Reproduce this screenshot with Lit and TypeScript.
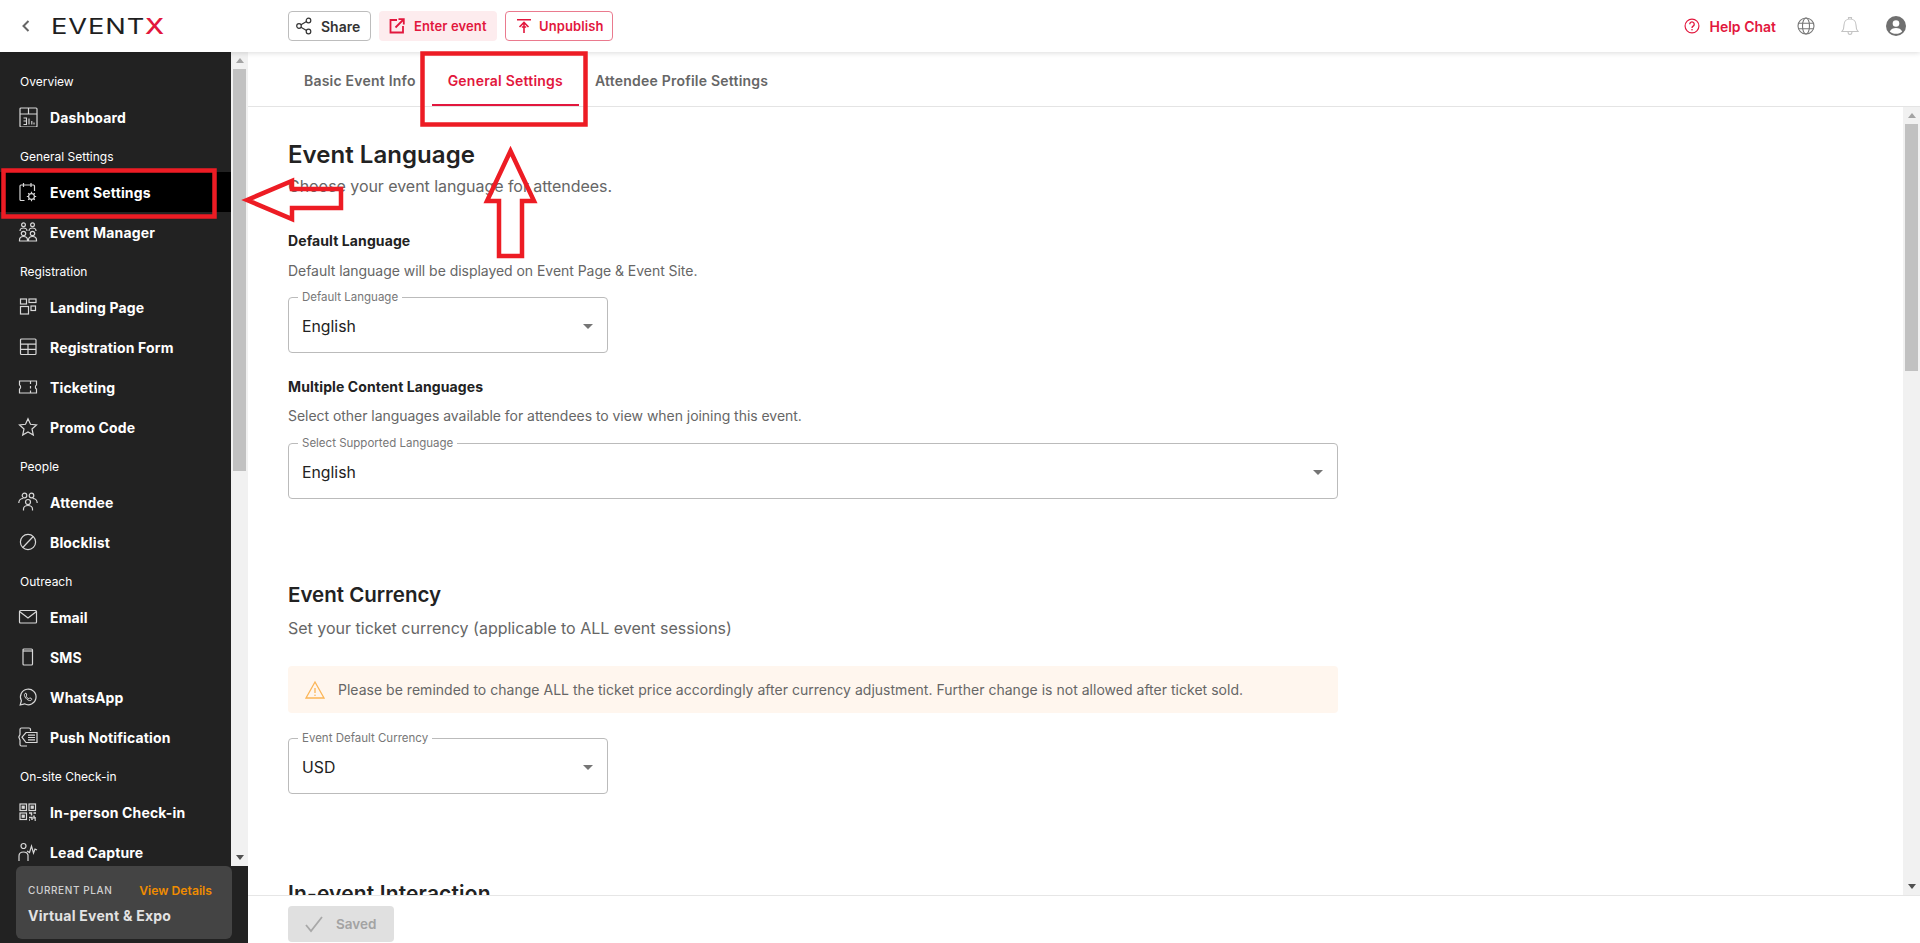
import { LitElement, html, css, svg } from "lit";
import { customElement } from "lit/decorators.js";

const I = (body: unknown, size = 20) => html`<svg class="ic" width=${size} height=${size} viewBox="0 0 20 20" fill="none" stroke="currentColor" stroke-width="1.2">${body}</svg>`;

const icons: Record<string, unknown> = {
  dashboard: I(svg`<rect x="2" y="1" width="17" height="19" rx="1"/><path d="M2 7h17M10.500 1v6"/><path d="M5.500 11h3v3h-3M8.500 14v3.500h-3M11 11.500V17.500M13.800 14v3.500M16 15.500v2" stroke-width="1.100"/>`),
  settings: I(svg`<path d="M6.500 18.500H3a1 1 0 0 1-1-1V4a1 1 0 0 1 1-1h12.500a1 1 0 0 1 1 1v5M5.500 1v4M13 1v4M8 3h2.500"/><circle cx="13.500" cy="14.500" r="2.900"/><path d="M13.500 9.800v1.800M13.500 17.400v1.800M8.800 14.500h1.800M16.400 14.500h1.800M10.200 11.200l1.200 1.200M15.600 16.600l1.200 1.200M16.800 11.200l-1.200 1.200M11.400 16.600l-1.200 1.200"/>`),
  manager: I(svg`<circle cx="5.500" cy="2.800" r="1.900"/><circle cx="14.500" cy="2.800" r="1.900"/><circle cx="5.500" cy="11.500" r="2.200"/><circle cx="14.500" cy="11.500" r="2.200"/><path d="M2 9c0-2 1.500-3 3.500-3S9 7 9 9M11 9c0-2 1.500-3 3.500-3S18 7 18 9M1.500 19v-1c0-2.500 1.800-3.500 4-3.500s4 1 4 3.500v1zM10.500 19v-1c0-2.500 1.800-3.500 4-3.500s4 1 4 3.500v1z"/>`),
  landing: I(svg`<rect x="2.500" y="2" width="6" height="5"/><rect x="11" y="2" width="7" height="3.500"/><rect x="2.500" y="9.500" width="8" height="7.500"/><rect x="13" y="9" width="4.500" height="4.500"/>`),
  form: I(svg`<rect x="2.500" y="2" width="15.500" height="15.500" rx="1"/><path d="M2.500 7.200h15.500M2.500 12.400h15.500M10 7.200v10.300"/>`),
  ticket: I(svg`<path d="M1.500 4h17v4c-1.500.5-1.500 3.500 0 4v4h-17v-4c1.500-.8 1.500-3.200 0-4zM12.500 4v3M12.500 9v2.500M12.500 13.500V16"/>`),
  star: I(svg`<path d="M10 1.800l2.500 5.500 6 .7-4.500 4 1.300 6L10 15l-5.300 3 1.300-6-4.500-4 6-.7z"/>`),
  attendee: I(svg`<circle cx="6.500" cy="3.500" r="2.300"/><circle cx="13.500" cy="3.500" r="2.300"/><circle cx="10" cy="10" r="2.500"/><path d="M.8 11c0-3 2-4.500 4.500-4.500M19.200 11c0-3-2-4.500-4.500-4.500M5.500 18.500v-1.500c0-2 2-3.500 4.500-3.500s4.500 1.500 4.500 3.500v1.500"/>`),
  block: I(svg`<circle cx="10" cy="10" r="7.600"/><path d="M4.800 15.500L15.200 4.500"/>`),
  mail: I(svg`<rect x="1.500" y="3.500" width="17" height="12.500" rx="1"/><path d="M1.500 4.500L10 11l8.500-6.500"/>`),
  sms: I(svg`<rect x="5" y="2" width="9.500" height="16" rx="1"/><path d="M5 4h9.500"/>`),
  whatsapp: I(svg`<path d="M2.200 18l1.200-4.300A7.800 7.800 0 1 1 6.500 16.800z"/><path d="M7 6.500c-1 1-.8 2.600.7 4.500 1.600 2 3.500 2.900 4.900 2.500.9-.3 1.200-1 1.100-1.700l-1.900-1-.9 1c-1.200-.3-2.400-1.500-2.900-2.800l.8-.9-.8-2z" stroke-width="1"/>`),
  push: I(svg`<path d="M9 19H3.500A1.500 1.500 0 0 1 2 17.500V13L.8 10 2 7.500V2.500A1.500 1.500 0 0 1 3.500 1H11a1.500 1.500 0 0 1 1.500 1.500V4"/><path d="M4 10.200L8 5.500h11v10H8zM10 8.200h7M10 10.500h7M10 12.800h7"/>`),
  qr: I(svg`<rect x="2" y="2" width="6.500" height="6.500"/><rect x="11" y="2" width="6.500" height="6.500"/><rect x="2" y="11" width="6.500" height="6.500"/><rect x="4.200" y="4.200" width="2" height="2" fill="currentColor"/><rect x="13.200" y="4.200" width="2" height="2" fill="currentColor"/><rect x="4.200" y="13.200" width="2" height="2" fill="currentColor"/><path d="M11 11h2.500v2.500M15.500 11H18M11 15.500h3v2.500M16 13.500V16h2M11 18h1M16.500 18H18" stroke-width="1.500"/>`),
  lead: I(svg`<circle cx="5.500" cy="4" r="2.500"/><path d="M1 19v-5c0-2.500 2-4 4.500-4s4 1 4.500 3v6M9 9l2.500 1.500L13.500 4l2 7 1.500-4 2 1"/>`),
};

const nav: { label?: string; items: [string, string][] }[] = [
  { label: "Overview", items: [["dashboard", "Dashboard"]] },
  { label: "General Settings", items: [["settings", "Event Settings"], ["manager", "Event Manager"]] },
  { label: "Registration", items: [["landing", "Landing Page"], ["form", "Registration Form"], ["ticket", "Ticketing"], ["star", "Promo Code"]] },
  { label: "People", items: [["attendee", "Attendee"], ["block", "Blocklist"]] },
  { label: "Outreach", items: [["mail", "Email"], ["sms", "SMS"], ["whatsapp", "WhatsApp"], ["push", "Push Notification"]] },
  { label: "On-site Check-in", items: [["qr", "In-person Check-in"], ["lead", "Lead Capture"]] },
];

@customElement("app-root")
export class AppRoot extends LitElement {
  static styles = css`
    :host { display: block; position: relative; height: 100vh; overflow: hidden; background: #fff; font-family: Inter, "Noto Sans", sans-serif; color: #222; }
    * { box-sizing: border-box; }
    .ic { display: block; flex: none; }

    .page { display: flex; flex-direction: column; height: 100%; }
    .top { flex: none; height: 52px; display: flex; align-items: center; position: relative; z-index: 2; background: #fff; box-shadow: 0 1px 5px rgba(0,0,0,.14); }
    .back { width: 52px; display: flex; justify-content: center; color: #666; }
    .logo { width: 236px; font-size: 22px; font-weight: 400; letter-spacing: .7px; color: #1f1f1f; line-height: 1; transform: scaleX(1.24); transform-origin: left center; margin-left: -1px; margin-right: 1px; }
    .logo b { color: #e2173d; font-weight: 500; }
    .btn { height: 30px; display: flex; align-items: center; border-radius: 4px; font-size: 13px; font-weight: 600; letter-spacing: .1px; white-space: nowrap; }
    .share { width: 83px; margin-right: 8px; border: 1px solid #bdbdbd; padding-left: 7px; gap: 9px; color: #333; font-size: 14px; letter-spacing: 0; }
    .enter { width: 118px; margin-right: 8px; background: #fdecee; color: #e2173d; padding-left: 10px; gap: 9px; }
    .unpub { width: 108px; border: 1px solid #ea7a8e; color: #e2173d; padding-left: 10px; gap: 7px; }
    .right { margin-left: auto; display: flex; align-items: center; padding-right: 14px; }
    .help { display: flex; align-items: center; gap: 9px; color: #e2173d; font-size: 14px; font-weight: 600; margin-right: 21px; }
    .globe { color: #777; margin-right: 26px; }
    .bell { color: #c4c4c4; margin-right: 27px; }

    .body { flex: 1; min-height: 0; display: flex; }
    .side { flex: none; width: 248px; background: #222; display: flex; flex-direction: column; }
    .sideScroll { height: 814px; flex: none; display: flex; }
    .nav { flex: none; width: 231px; height: 100%; overflow: hidden; padding-top: 10px; color: #fff; }
    .group { font-size: 12px; line-height: 15px; padding: 12px 0 8px 20px; }
    .item { height: 40px; display: flex; align-items: center; gap: 12px; padding-left: 18px; font-size: 14px; font-weight: 700; letter-spacing: .15px; }
    .item .ic { color: #d8d8d8; }
    .item.active { background: #000; }

    .track { flex: none; width: 17px; background: #f1f1f1; display: flex; flex-direction: column; align-items: center; height: 100%; }
    .arrow { flex: none; height: 17px; width: 17px; display: flex; align-items: center; justify-content: center; }
    .arrow i { display: block; width: 0; height: 0; border-left: 4px solid transparent; border-right: 4px solid transparent; }
    .arrow.up i { border-bottom: 5px solid #a3a3a3; }
    .arrow.down { margin-top: auto; }
    .arrow.down i { border-top: 5px solid #505050; }
    .thumb { width: 13px; background: #c1c1c1; flex: none; }

    .plan { margin: 0 16px 4px; width: 216px; height: 73px; background: #444; border-radius: 6px; padding: 16px 12px 0 12px; }
    .planRow { display: flex; justify-content: space-between; align-items: center; height: 16px; }
    .planRow span { font-size: 10px; letter-spacing: .6px; color: #d0d0d0; font-weight: 500; }
    .planRow a { font-size: 12.200px; font-weight: 600; color: #f08c00; margin-right: 8px; }
    .planName { margin-top: 9px; font-size: 14px; font-weight: 700; color: #e2e2e2; letter-spacing: .25px; }

    .main { flex: 1; min-width: 0; display: flex; flex-direction: column; }
    .tabs { flex: none; height: 55px; display: flex; padding-left: 40px; border-bottom: 1px solid #e4e4e4; }
    .tab { padding: 5px 16px 0; display: flex; align-items: center; height: 54px; font-size: 14px; font-weight: 600; color: #666; letter-spacing: .22px; white-space: nowrap; border-bottom: 2px solid transparent; }
    .tab.on { color: #e2173d; border-bottom-color: #e2173d; }

    .mid { flex: 1; min-height: 0; display: flex; }
    .scroll { flex: 1; min-width: 0; overflow: hidden; padding: 32px 0 0 40px; }
    .wrap { width: 1050px; }
    h2 { margin: 0; font-size: 24px; line-height: 32px; font-weight: 600; color: #222; letter-spacing: .05px; }
    h3 { margin: 82px 0 0; font-size: 20.500px; line-height: 28px; font-weight: 600; color: #222; }
    h3.in { margin-top: 86px; font-size: 21px; letter-spacing: .15px; }
    .sub { margin: 3px 0 0; font-size: 16px; line-height: 24px; color: #666; letter-spacing: -.05px; }
    .sub.c { margin-top: 7px; letter-spacing: 0; }
    h4 { margin: 33px 0 0; font-size: 14px; line-height: 20px; font-weight: 700; color: #222; letter-spacing: .1px; }
    h4.b { margin-top: 24px; }
    .help-t { margin: 10px 0 0; font-size: 14px; line-height: 20px; color: #666; letter-spacing: -.04px; }
    .help-t.b { margin-top: 9px; }
    .sel { position: relative; margin-top: 16px; height: 56px; width: 320px; border: 1px solid #bbb; border-radius: 4px; display: flex; align-items: center; padding: 2px 14px 0 13px; font-size: 15.800px; color: #222; }
    .sel.wide { width: 100%; margin-top: 17px; }
    .sel.cur { margin-top: 25px; }
    .sel label { position: absolute; left: 9px; top: -8px; background: #fff; padding: 0 4px; font-size: 11.500px; line-height: 15px; color: #777; }
    .caret { margin-left: auto; width: 0; height: 0; border-left: 5px solid transparent; border-right: 5px solid transparent; border-top: 5px solid #757575; }
    .alert { margin-top: 26px; height: 47px; background: #fff6ee; border-radius: 4px; display: flex; align-items: center; gap: 13px; padding-left: 17px; font-size: 14px; letter-spacing: .02px; color: #666; }
    .alert .ic { color: #fbb557; }

    .foot { flex: none; height: 48px; border-top: 1px solid #e6e6e6; padding: 10px 0 0 40px; }
    .saved { width: 106px; height: 36px; background: #e0e0e0; border-radius: 4px; display: flex; align-items: center; padding-left: 17px; gap: 13px; color: #a3a3a3; font-size: 13.500px; font-weight: 600; }

    .notes { position: absolute; left: 0; top: 0; z-index: 5; pointer-events: none; }
  `;

  render() {
    return html`
      <div class="page">
        <header class="top">
          <div class="back"><svg class="ic" width="10" height="14" viewBox="0 0 10 14" fill="none" stroke="currentColor" stroke-width="2"><path d="M7.500 2L2.500 7l5 5"/></svg></div>
          <div class="logo">EVENT<b>X</b></div>
          <div class="btn share">
            <svg class="ic" width="16" height="18" viewBox="0 0 16 18" fill="none" stroke="currentColor" stroke-width="1.200"><circle cx="3" cy="9" r="2.300"/><circle cx="12.500" cy="3.500" r="2.300"/><circle cx="12.500" cy="14.500" r="2.300"/><path d="M5 7.800l5.500-3.200M5 10.200l5.500 3.200"/></svg>Share
          </div>
          <div class="btn enter">
            <svg class="ic" width="16" height="16" viewBox="0 0 16 16" fill="none" stroke="currentColor" stroke-width="1.800"><path d="M8 2H1.500v12.500H14V8M6.500 9.500L14.500 1.500M9.500 1.200h5.300v5.300"/></svg>Enter event
          </div>
          <div class="btn unpub">
            <svg class="ic" width="16" height="16" viewBox="0 0 16 16" fill="none" stroke="currentColor" stroke-width="1.600"><path d="M1 1.800h14M8 15V5M3.500 9L8 4.500 12.500 9M5.800 9h4.400"/></svg>Unpublish
          </div>
          <div class="right">
            <div class="help">
              <svg class="ic" width="16" height="16" viewBox="0 0 18 18" fill="none" stroke="currentColor" stroke-width="1.300"><circle cx="9" cy="9" r="7.800"/><path d="M6.500 7a2.500 2.500 0 1 1 3.800 2.100c-.9.600-1.300 1-1.300 2.100" stroke-width="1.500"/><circle cx="9" cy="13.300" r=".9" fill="currentColor" stroke="none"/></svg>
              Help Chat
            </div>
            <svg class="ic globe" width="18" height="18" viewBox="0 0 18 18" fill="none" stroke="currentColor" stroke-width="1.100"><circle cx="9" cy="9" r="8"/><ellipse cx="9" cy="9" rx="3.500" ry="8"/><path d="M1.500 6.200h15M1.500 11.800h15"/></svg>
            <svg class="ic bell" width="18" height="20" viewBox="0 0 18 20" fill="none" stroke="currentColor" stroke-width="1.100"><path d="M1 15.500c1.500-1.500 2-3 2-6.500 0-3.500 2.500-6 6-6s6 2.500 6 6c0 3.500.5 5 2 6.500zM7.500 3V1.500h3V3M7 15.500c0 2 1 3 2 3s2-1 2-3"/></svg>
            <svg class="ic" width="20" height="20" viewBox="0 0 20 20"><circle cx="10" cy="10" r="10" fill="#707070"/><circle cx="10" cy="7.500" r="3.300" fill="#fff"/><path d="M3.800 15.500c1-2.500 3.500-3.500 6.200-3.500s5.200 1 6.200 3.500c-1.500 1.500-3.700 2.300-6.200 2.300s-4.700-.8-6.200-2.300z" fill="#fff"/></svg>
          </div>
        </header>
        <div class="body">
          <aside class="side">
            <div class="sideScroll">
              <nav class="nav">
                ${nav.map((g) => html`
                  <div class="group">${g.label}</div>
                  ${g.items.map(([ic, t]) => html`<div class="item ${t === "Event Settings" ? "active" : ""}">${icons[ic]}<span>${t}</span></div>`)}
                `)}
              </nav>
              <div class="track">
                <div class="arrow up"><i></i></div>
                <div class="thumb" style="height:402px"></div>
                <div class="arrow down"><i></i></div>
              </div>
            </div>
            <div class="plan">
              <div class="planRow"><span>CURRENT PLAN</span><a>View Details</a></div>
              <div class="planName">Virtual Event &amp; Expo</div>
            </div>
          </aside>
          <main class="main">
            <div class="tabs">
              <div class="tab">Basic Event Info</div>
              <div class="tab on">General Settings</div>
              <div class="tab">Attendee Profile Settings</div>
            </div>
            <div class="mid">
              <div class="scroll">
                <div class="wrap">
                  <h2>Event Language</h2>
                  <p class="sub">Choose your event language for attendees.</p>
                  <h4>Default Language</h4>
                  <p class="help-t">Default language will be displayed on Event Page &amp; Event Site.</p>
                  <div class="sel"><label>Default Language</label>English<span class="caret"></span></div>
                  <h4 class="b">Multiple Content Languages</h4>
                  <p class="help-t b">Select other languages available for attendees to view when joining this event.</p>
                  <div class="sel wide"><label>Select Supported Language</label>English<span class="caret"></span></div>
                  <h3>Event Currency</h3>
                  <p class="sub c">Set your ticket currency (applicable to ALL event sessions)</p>
                  <div class="alert">
                    <svg class="ic" width="20" height="20" viewBox="0 0 20 20" fill="none" stroke="currentColor" stroke-width="1.300"><path d="M10 2L19 18H1zM10 8v5"/><circle cx="10" cy="15.300" r=".8" fill="currentColor" stroke="none"/></svg>
                    Please be reminded to change ALL the ticket price accordingly after currency adjustment. Further change is not allowed after ticket sold.
                  </div>
                  <div class="sel cur"><label>Event Default Currency</label>USD<span class="caret"></span></div>
                  <h3 class="in">In-event Interaction</h3>
                </div>
              </div>
              <div class="track">
                <div class="arrow up"><i></i></div>
                <div class="thumb" style="height:247px"></div>
                <div class="arrow down"><i></i></div>
              </div>
            </div>
            <div class="foot">
              <div class="saved">
                <svg class="ic" width="18" height="18" viewBox="0 0 18 18" fill="none" stroke="#a8a8a8" stroke-width="1.800"><path d="M1 10l5 6L17 2"/></svg>Saved
              </div>
            </div>
          </main>
        </div>
      </div>
      <svg class="notes" width="1920" height="943" viewBox="0 0 1920 943" fill="none" stroke="#ed1c24" stroke-width="4.500">
        <rect x="3.500" y="170.500" width="211" height="46"/>
        <rect x="422.500" y="53.500" width="163" height="71"/>
        <path d="M247 200L292 181V189H341V208H292V219Z" stroke-linejoin="miter"/>
        <path d="M510.500 151L534 201H522V256H499V201H487Z" stroke-linejoin="miter"/>
      </svg>
    `;
  }
}
